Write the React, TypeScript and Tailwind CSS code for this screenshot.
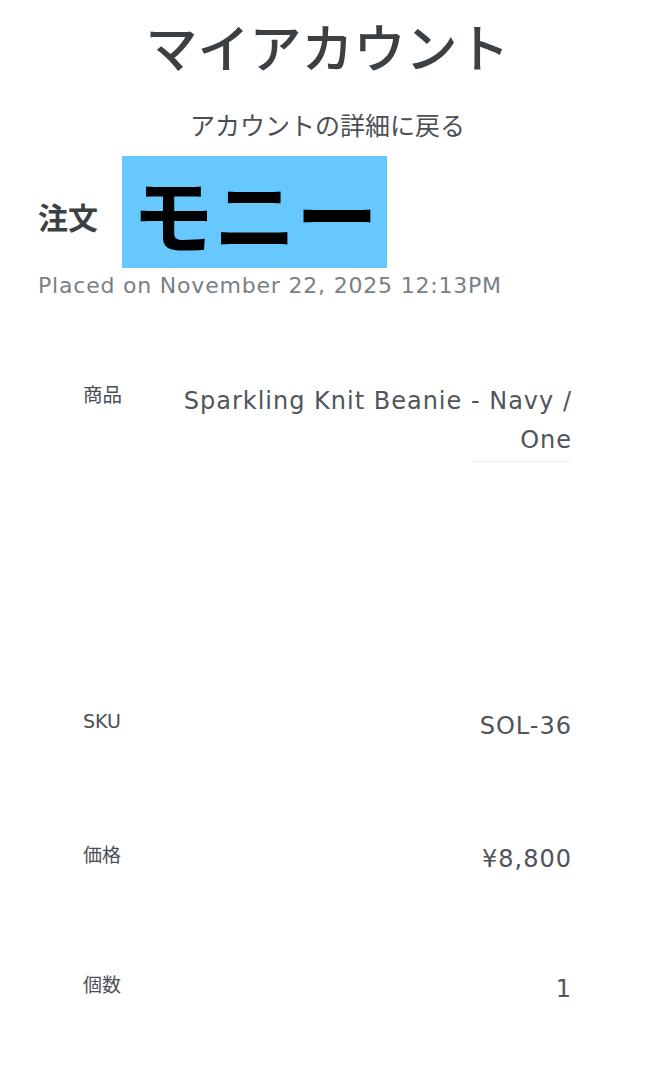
import React from "react";

const jp = { fontFamily: '"DejaVu Sans", "Noto Sans CJK JP", sans-serif' };
const cjk = { fontFamily: '"Noto Sans CJK JP", sans-serif' };

const rows = [
  { label: "SKU", value: "SOL-36", h: "h-[133px]" },
  { label: "価格", value: "¥8,800", h: "h-[130px]" },
  { label: "個数", value: "1", h: "h-[90px]" },
];

const App = () => {
  return (
    <div className="w-[655px] min-h-[1080px] bg-white text-[#444a50]" style={jp}>
      {/* Header */}
      <h1 className="pt-[14px] text-center text-[52px] leading-[64px] font-medium text-[#3b4045]" style={cjk}>
        マイアカウント
      </h1>
      <a className="block mt-[30px] text-center text-[25px] leading-[32px] text-[#4a4f55]" style={cjk}>
        アカウントの詳細に戻る
      </a>

      {/* Order title */}
      <div className="mt-[16px] flex items-center pl-[38px]">
        <span className="mt-[8px] w-[84px] text-[30px] font-semibold text-[#3b4045]" style={cjk}>注文</span>
        <div className="w-[265px] h-[112px] bg-[#66c8fc] flex items-center pl-[10px]">
          <span className="whitespace-nowrap text-[82px] leading-none font-bold text-black" style={cjk}>モニー</span>
        </div>
      </div>
      <p className="pt-[3px] pl-[38px] text-[22px] leading-[30px] tracking-[0.8px] text-[#7a7f85]">
        Placed on November 22, 2025 12:13PM
      </p>

      {/* Line item */}
      <div className="mx-[83px] mt-[79px]">
        <div className="flex h-[329px]">
          <div className="w-[97px] pt-[2px] text-[19.5px] leading-[24px] text-[#4a4f55]" style={cjk}>商品</div>
          <div className="flex-1 flex flex-col items-end pt-[2px]">
            <div className="text-right text-[24px] leading-[39px] tracking-[1px] text-[#50555b] whitespace-nowrap">
              Sparkling Knit Beanie - Navy /<br />One
            </div>
            <div className="mt-[1px] w-[100px] border-b border-[#f1f1f1]" />
          </div>
        </div>
        {rows.map((r) => (
          <div key={r.label} className={`flex justify-between ${r.h}`}>
            <span className="text-[19px] leading-[24px] text-[#4a4f55]" style={r.label === "SKU" ? undefined : cjk}>
              {r.label}
            </span>
            <span className="mt-[2px] text-[24px] leading-[30px] tracking-[1px] text-[#50555b]">{r.value}</span>
          </div>
        ))}
      </div>
    </div>
  );
};

export default App;
